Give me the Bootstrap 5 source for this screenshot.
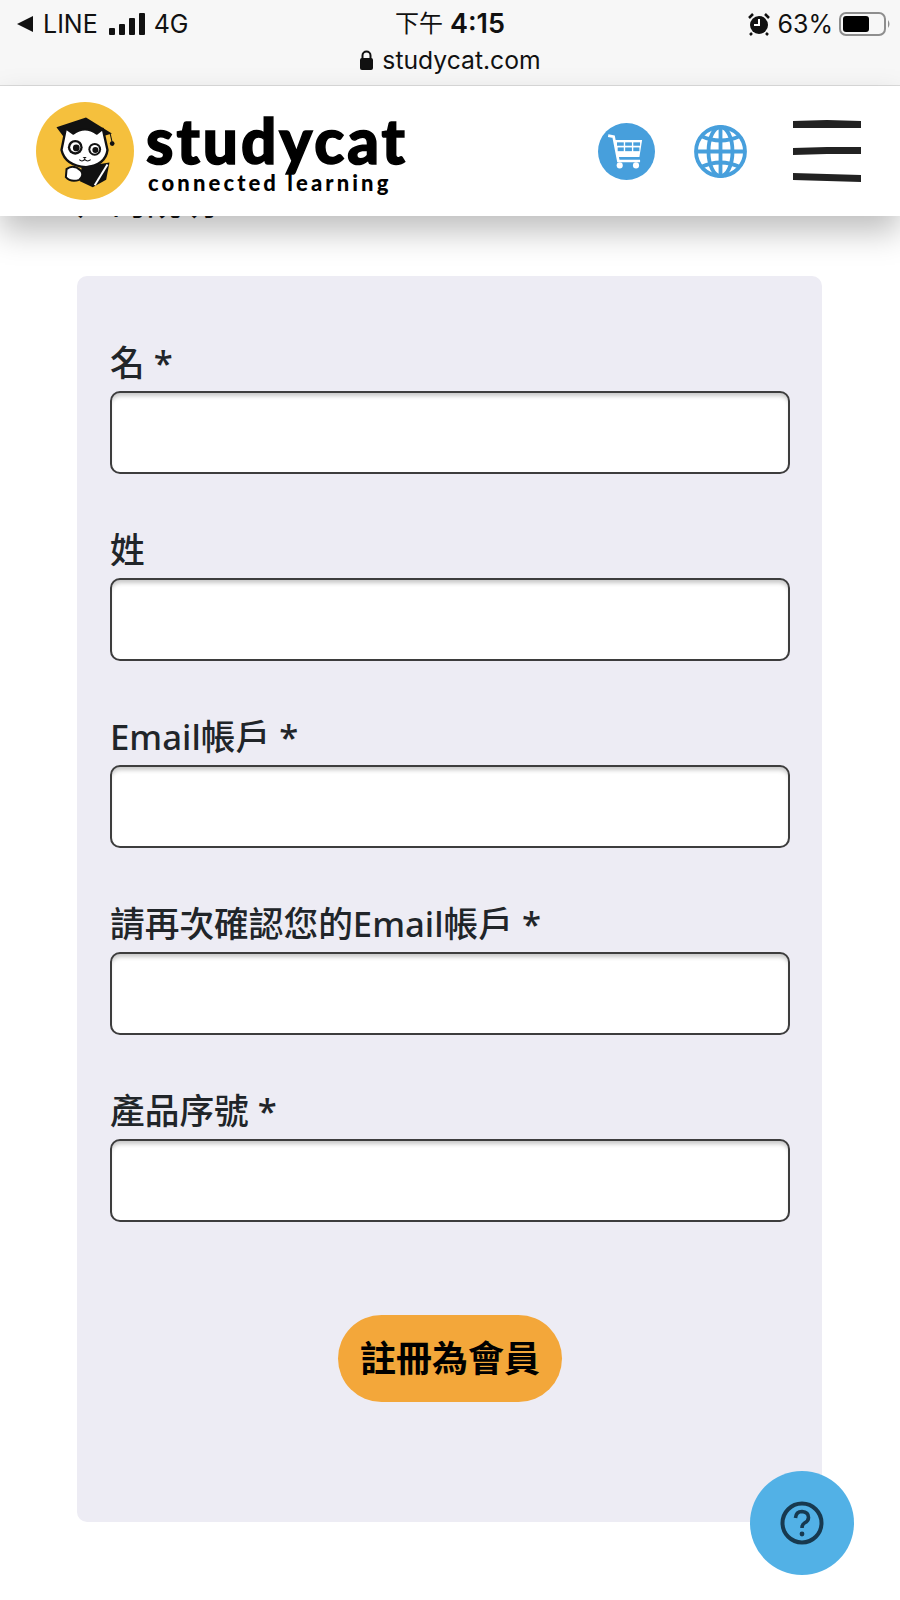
<!DOCTYPE html>
<html lang="zh-Hant">

<head>
    <meta charset="UTF-8">
    <title>Studycat</title>
    <link href="https://cdn.jsdelivr.net/npm/bootstrap@5.3.0/dist/css/bootstrap.min.css" rel="stylesheet">
    <style>
        body {
            font-family: "Noto Sans", "Noto Sans CJK TC", sans-serif;
            color: #212529;
            background: #fff;
        }

        .phone-bar {
            height: 86px;
            background: #f7f7f7;
            border-bottom: 1px solid #dcdcdc;
            font-family: Inter, "Noto Sans CJK TC", sans-serif;
            color: #111;
            padding: 8px 8px 0 17px;
        }

        .phone-row {
            height: 32px;
            font-size: 25px;
            line-height: 32px;
        }

        .phone-side {
            flex: 1 1 0;
        }

        .phone-gap {
            margin-left: 10px;
        }

        .phone-time {
            font-size: 24px;
            margin-right: 9px;
        }

        .phone-clock {
            font-size: 27px;
            font-weight: 600;
            margin-left: 7px;
        }

        .phone-url {
            font-size: 24.7px;
            line-height: 34px;
            margin-top: 3px;
            padding-right: 9px;
        }

        .site-nav {
            height: 130px;
            padding: 0 39px 0 36px;
            background: #fff;
            box-shadow: 0 16px 30px rgba(0, 0, 0, .25);
            position: relative;
            z-index: 5;
        }

        .logo-text {
            margin-left: 12px;
            margin-top: 4px;
        }

        .logo-word {
            font-family: Lato, sans-serif;
            font-weight: 900;
            font-size: 62px;
            line-height: 58px;
            color: #000;
            letter-spacing: 3px;
            -webkit-text-stroke: 1.5px #000;
        }

        .logo-sub {
            font-family: Lato, sans-serif;
            font-weight: 900;
            font-size: 22px;
            line-height: 24px;
            letter-spacing: 3.1px;
            color: #000;
            margin: 2px 0 0 2px;
        }

        .clipped-line {
            font-size: 34.7px;
            font-weight: 500;
            line-height: 50px;
            margin: -39px 0 0;
            padding-left: 77px;
            color: #111;
            height: 50px;
        }

        .form-panel {
            width: 745px;
            height: 1246px;
            margin: 49px 0 0 77px;
            padding: 61px 32px 0 33px;
            background: #edecf4;
            border-radius: 10px;
        }

        .field-block {
            height: 187px;
        }

        .field-label {
            display: block;
            height: 54px;
            margin: 0;
            font-size: 34.7px;
            font-weight: 500;
            line-height: 52px;
            color: #212529;
        }

        .field-input {
            height: 83px;
            border: 2px solid #3d3d3d;
            border-radius: 10px;
            box-shadow: inset 0 5px 4px -2px rgba(0, 0, 0, .22);
        }

        .join-btn {
            width: 224px;
            height: 87px;
            margin-top: 43px;
            background: #f3a73a;
            border: 0;
            border-radius: 44px;
            color: #000;
            font-size: 36px;
            font-weight: 600;
            padding: 0;
        }

        .help-bubble {
            position: absolute;
            left: 750px;
            top: 1471px;
            width: 104px;
            height: 104px;
            border-radius: 50%;
            background: #52b1e6;
        }
    </style>
</head>

<body>
    <div class="phone-bar">
        <div class="phone-row d-flex align-items-center">
            <div class="phone-side d-flex align-items-center">
                <svg width="16" height="16" viewBox="0 0 16 16">
                    <polygon points="0,8 16,0 16,16" fill="#111" />
                </svg>
                <span class="phone-gap">LINE</span>
                <svg class="phone-gap" width="38" height="24" viewBox="0 0 38 24">
                    <rect x="1" y="16" width="6" height="7" rx="1" fill="#111" />
                    <rect x="11" y="12" width="6" height="11" rx="1" fill="#111" />
                    <rect x="21" y="6" width="6" height="17" rx="1" fill="#111" />
                    <rect x="31" y="1" width="6" height="22" rx="1" fill="#111" />
                </svg>
                <span class="ms-2">4G</span>
            </div>
            <div class="phone-time d-flex align-items-center">下午<span class="phone-clock">4:15</span></div>
            <div class="phone-side d-flex align-items-center justify-content-end">
                <svg width="22" height="24" viewBox="0 0 22 24">
                    <circle cx="11" cy="13" r="9" fill="#111" />
                    <path d="M1 6 L5 2 M21 6 L17 2 M4 21 L2 23 M18 21 L20 23" stroke="#111" stroke-width="2.5" />
                    <path d="M11 7 V13 H6" stroke="#fff" stroke-width="2" fill="none" />
                </svg>
                <span class="ms-2">63%</span>
                <svg width="59" height="26" viewBox="0 0 59 26">
                    <rect x="7" y="2" width="45" height="22" rx="6" fill="none" stroke="#8e8e8e" stroke-width="2" />
                    <rect x="10" y="5" width="26" height="16" rx="3" fill="#000" />
                    <path d="M55 9 Q58 13 55 17 Z" fill="#8e8e8e" />
                </svg>
            </div>
        </div>
        <div class="phone-url d-flex align-items-center justify-content-center">
            <svg class="me-2" width="15" height="20" viewBox="0 0 15 20">
                <path d="M3.5 9 V5.5 a4 4 0 0 1 8 0 V9" fill="none" stroke="#111" stroke-width="2" />
                <rect x="1" y="8" width="13" height="12" rx="2" fill="#111" />
            </svg>
            <span>studycat.com</span>
        </div>
    </div>

    <nav class="site-nav d-flex align-items-center">
        <div class="d-flex align-items-center">
            <svg width="98" height="98" viewBox="19 22 292 292">
                <circle cx="165" cy="168" r="146" fill="#f5c03d" />
                <path d="M80 97 L168 68 L245 116 L168 140 L100 124 Z" fill="#111" />
                <path d="M108 100 L130 116 Q165 90 200 116 L218 102 L232 165 Q226 210 168 216 Q106 212 95 165 Z" fill="#fff" stroke="#111" stroke-width="7" stroke-linejoin="round" />
                <path d="M240 116 L246 142" stroke="#111" stroke-width="3" />
                <circle cx="246" cy="146" r="7" fill="#111" />
                <circle cx="136" cy="157" r="22" fill="#111" />
                <circle cx="136" cy="157" r="15" fill="#fff" />
                <circle cx="139" cy="159" r="10" fill="#111" />
                <circle cx="194" cy="163" r="19" fill="#111" />
                <circle cx="194" cy="163" r="13" fill="#fff" />
                <circle cx="196" cy="165" r="9" fill="#111" />
                <path d="M158 186 L170 186 L164 192 Z" fill="#111" />
                <path d="M148 194 Q156 202 164 193 Q172 202 182 194" fill="none" stroke="#111" stroke-width="3" />
                <path d="M155 216 L238 202 L228 254 L188 276 L150 258 Z" fill="#111" />
                <path d="M194 270 L232 208" stroke="#fff" stroke-width="6" />
                <path d="M110 222 Q130 206 152 226 Q164 240 148 254 Q122 262 108 246 Z" fill="#fff" stroke="#111" stroke-width="6" />
            </svg>
            <div class="logo-text">
                <div class="logo-word">studycat</div>
                <div class="logo-sub">connected learning</div>
            </div>
        </div>
        <div class="ms-auto d-flex align-items-center">
            <svg width="57" height="57" viewBox="0 0 168 168">
                <circle cx="84" cy="84" r="84" fill="#479fdc" />
                <path d="M30 37 L46 40 L60 112 H124" fill="none" stroke="#fff" stroke-width="8" />
                <path d="M50 50 H130 L122 100 H56 Z" fill="#fff" />
                <g fill="#479fdc">
                    <rect x="56" y="57" width="20" height="10" />
                    <rect x="80" y="57" width="20" height="10" />
                    <rect x="104" y="57" width="20" height="10" />
                    <rect x="58" y="72" width="18" height="11" />
                    <rect x="80" y="72" width="20" height="11" />
                    <rect x="104" y="72" width="18" height="11" />
                </g>
                <circle cx="64" cy="125" r="9" fill="#fff" />
                <circle cx="112" cy="125" r="9" fill="#fff" />
            </svg>
            <svg width="53" height="53" viewBox="0 0 53 53" style="margin-left:39px">
                <g fill="none" stroke="#479fdc" stroke-width="3.8">
                    <circle cx="26.5" cy="26.5" r="24.5" />
                    <ellipse cx="26.5" cy="26.5" rx="12" ry="24.5" />
                    <path d="M26.5 2 V51 M2 26.5 H51" />
                    <path d="M7 11 Q26.5 20 46 11 M7 42 Q26.5 33 46 42" />
                </g>
            </svg>
            <svg width="68" height="62" viewBox="0 0 68 62" style="margin-left:46px">
                <g fill="#222">
                    <polygon points="0,1 34,0 68,1 68,8 34,8 0,8" />
                    <polygon points="0,28 34,27 68,27 68,34 34,34 0,35" />
                    <polygon points="0,53 34,54 68,55 68,62 34,61 0,60" />
                </g>
            </svg>
        </div>
    </nav>

    <p class="clipped-line">戶的說明</p>

    <form class="form-panel">
        <div class="field-block">
            <label class="field-label">名 *</label>
            <input type="text" class="form-control field-input">
        </div>
        <div class="field-block">
            <label class="field-label">姓</label>
            <input type="text" class="form-control field-input">
        </div>
        <div class="field-block">
            <label class="field-label">Email帳戶 *</label>
            <input type="text" class="form-control field-input">
        </div>
        <div class="field-block">
            <label class="field-label">請再次確認您的Email帳戶 *</label>
            <input type="text" class="form-control field-input">
        </div>
        <div class="field-block">
            <label class="field-label">產品序號 *</label>
            <input type="text" class="form-control field-input">
        </div>
        <div class="text-center">
            <button type="button" class="btn join-btn">註冊為會員</button>
        </div>
    </form>

    <div class="help-bubble d-flex align-items-center justify-content-center">
        <svg width="44" height="44" viewBox="0 0 44 44">
            <circle cx="22" cy="22" r="19.5" fill="none" stroke="#17394f" stroke-width="4" />
            <path d="M15.5 17 Q16 10.5 22 10.5 Q28.5 11 28.5 16.5 Q28.5 20 24.5 22 Q22 23.5 22 27" fill="none" stroke="#17394f" stroke-width="3.6" />
            <circle cx="22" cy="33" r="2.4" fill="#17394f" />
        </svg>
    </div>

    <script src="https://cdn.jsdelivr.net/npm/bootstrap@5.3.0/dist/js/bootstrap.bundle.min.js"></script>
</body>

</html>
